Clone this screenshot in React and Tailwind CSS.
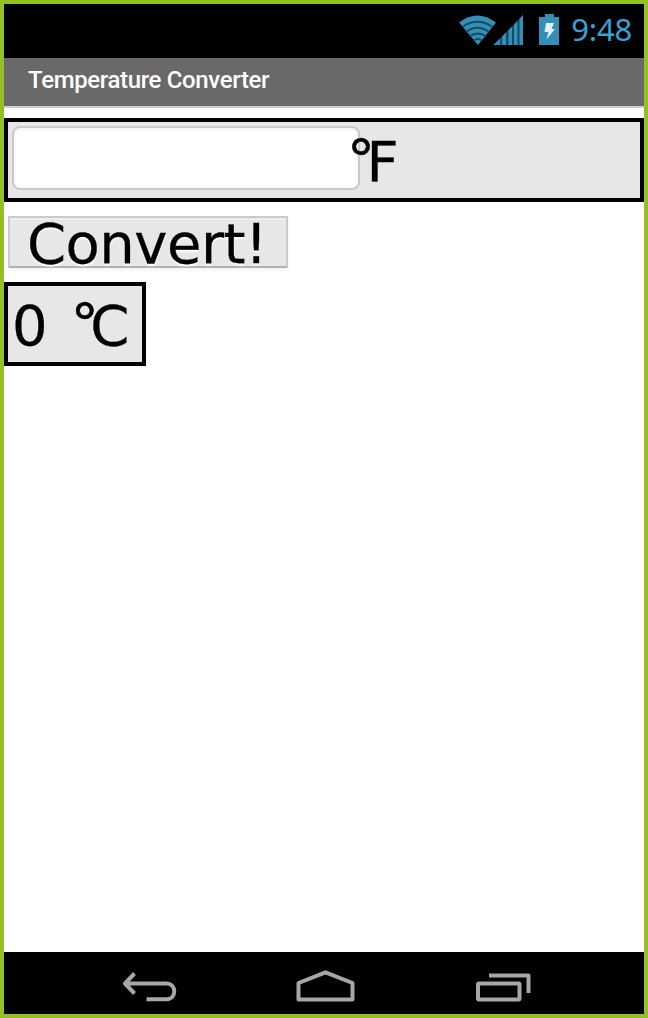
function StatusIcons() {
  return (
    <svg width="104" height="34" viewBox="0 0 104 34" className="block shrink-0">
      <path d="M1 5.5Q19.5-8.5 38 5.5L20 28Z" transform="translate(1 3)" fill="#338fb8" />
      <g fill="none" stroke="#174b62" strokeWidth="2">
        <path d="M5.500 13Q20.500 2.500 35.500 13" />
        <path d="M9 18Q20.500 9.500 32 18" />
        <path d="M12.500 22.500Q21 16.500 29 22.500" />
        <path d="M16.500 26.500Q21 23.500 25 26.500" />
      </g>
      <path d="M36.500 31L66 1V31Z" fill="#174b62" />
      <g fill="#338fb8">
        <path d="M36.500 31L43 24.500V31Z" />
        <path d="M45 22.500L49 18.500V31H45Z" />
        <path d="M51.500 16L55 12.500V31H51.500Z" />
        <path d="M57 10.500L60.500 7V31H57Z" />
        <path d="M62.500 5L66 1V31H62.500Z" />
        <path d="M82 3H88V0H97V3H102V31H82Z" />
      </g>
      <path d="M89 9H97L94.500 15H98L89.500 25.500L91.500 18H87.500Z" fill="#e3f2f7" />
    </svg>
  );
}

function NavIcons() {
  return (
    <svg width="640" height="62" viewBox="4 952 640 62" className="block" fill="none" stroke="#a7a7a7" strokeWidth="4" strokeLinejoin="round">
      <path d="M125 983.500H166C177 983.500 177 999.300 166 999.300H146.500M134.500 973.500L125 983.500L134.500 993.500" />
      <path d="M298.500 999.500V983L325.500 972.300L352.500 983V999.500Z" />
      <rect x="478" y="983.500" width="41.500" height="16" rx="1" />
      <path d="M489 975.500H528.500V993" />
    </svg>
  );
}

function Unit({ letter }) {
  return (
    <span className="whitespace-nowrap">
      <span className="align-[2px] leading-none tracking-[-8.5px] [-webkit-text-stroke:0.6px_#000]">°</span>
      {letter}
    </span>
  );
}

export default function App() {
  return (
    <div className="flex h-[1018px] w-[648px] flex-col overflow-hidden border-4 border-[#93c123] bg-white text-black">
      <div className="flex h-[54px] shrink-0 items-start justify-end bg-black pr-3 pt-[7px]">
        <div className="pt-[3px]"><StatusIcons /></div>
        <span className="ml-[10px] font-['Noto_Sans',sans-serif] text-[31px] leading-[36px] tracking-[-0.2px] text-[#35a3d5]">9:48</span>
      </div>
      <header className="h-[50px] shrink-0 border-b-2 border-[#cfcfcf] bg-[#696969] pl-6">
        <h1 className="font-['Roboto',sans-serif] text-[24px] font-medium leading-[44px] tracking-[-0.36px] text-white">Temperature Converter</h1>
      </header>
      <main className="flex min-h-0 flex-1 flex-col items-start pt-[10px] font-['DejaVu_Sans',sans-serif] text-[56px] leading-[76px] [-webkit-text-stroke:0.3px_#000]">
        <div className="flex h-[84px] w-full border-4 border-black bg-[#e7e7e7] pl-1">
          <input aria-label="Fahrenheit" className="mt-1 h-16 w-[348px] rounded-lg border-2 border-[#cacaca] bg-white shadow-[inset_0_2px_4px_rgba(0,0,0,0.06)] outline-none" />
          <div className="relative -ml-[13px] mt-[2px]"><Unit letter="F" /></div>
        </div>
        <button className="ml-1 mt-[14px] flex h-[52px] w-[280px] items-center border-2 border-b-2 border-[#cacaca] border-b-[#b1b1b1] bg-[#e7e7e7] pl-[17px] pt-[3px] leading-[50px] tracking-[-0.5px] [text-shadow:0_2px_2px_#fff] shadow-[inset_0_2px_0_rgba(255,255,255,0.3),0_2px_4px_rgba(0,0,0,0.06)]">Convert!</button>
        <div className="mt-[14px] flex h-[84px] w-[142px] border-4 border-black bg-[#e7e7e7] pl-1 pt-[2px]">
          <span className="mr-[23px]">0</span>
          <Unit letter="C" />
        </div>
      </main>
      <nav className="h-[62px] shrink-0 bg-black"><NavIcons /></nav>
    </div>
  );
}
